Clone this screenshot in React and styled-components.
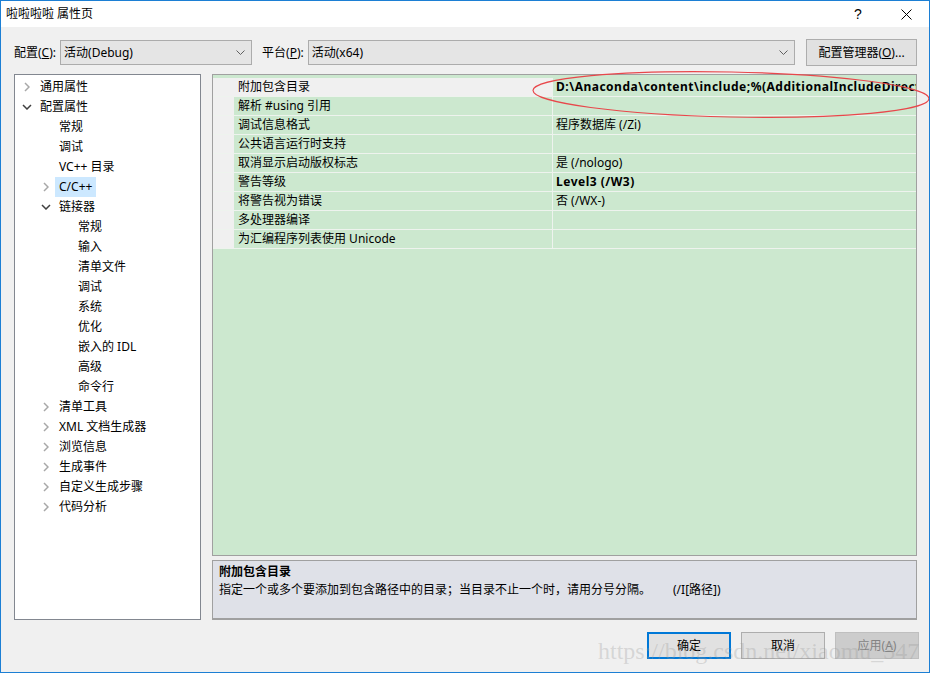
import React from 'react'
import styled, { createGlobalStyle } from 'styled-components'

const uiFont = `"Noto Sans", "Noto Sans CJK SC", sans-serif`

const GlobalStyle = createGlobalStyle`
    html, body {
        margin: 0;
        padding: 0;
        background: #f0f0f0;
    }
    body {
        font-family: ${uiFont};
        font-size: 12px;
        color: #000;
    }
`

const treeItems = [
    { label: '通用属性', level: 0, toggle: 'closed' },
    { label: '配置属性', level: 0, toggle: 'open' },
    { label: '常规', level: 1 },
    { label: '调试', level: 1 },
    { label: 'VC++ 目录', level: 1 },
    { label: 'C/C++', level: 1, toggle: 'closed', selected: true },
    { label: '链接器', level: 1, toggle: 'open' },
    { label: '常规', level: 2 },
    { label: '输入', level: 2 },
    { label: '清单文件', level: 2 },
    { label: '调试', level: 2 },
    { label: '系统', level: 2 },
    { label: '优化', level: 2 },
    { label: '嵌入的 IDL', level: 2 },
    { label: '高级', level: 2 },
    { label: '命令行', level: 2 },
    { label: '清单工具', level: 1, toggle: 'closed' },
    { label: 'XML 文档生成器', level: 1, toggle: 'closed' },
    { label: '浏览信息', level: 1, toggle: 'closed' },
    { label: '生成事件', level: 1, toggle: 'closed' },
    { label: '自定义生成步骤', level: 1, toggle: 'closed' },
    { label: '代码分析', level: 1, toggle: 'closed' },
]

const props = [
    { name: '附加包含目录', value: 'D:\\Anaconda\\content\\include;%(AdditionalIncludeDirectories)', bold: true, selected: true },
    { name: '解析 #using 引用', value: '' },
    { name: '调试信息格式', value: '程序数据库 (/Zi)' },
    { name: '公共语言运行时支持', value: '' },
    { name: '取消显示启动版权标志', value: '是 (/nologo)' },
    { name: '警告等级', value: 'Level3 (/W3)', bold: true },
    { name: '将警告视为错误', value: '否 (/WX-)' },
    { name: '多处理器编译', value: '' },
    { name: '为汇编程序列表使用 Unicode', value: '' },
]

const Chevron = ({ open }) => (
    open ? (
        <svg width="10" height="6" viewBox="0 0 10 6">
            <polyline points="1,1 5,5 9,1" fill="none" stroke="#404040" strokeWidth="1.5" />
        </svg>
    ) : (
        <svg width="6" height="10" viewBox="0 0 6 10">
            <polyline points="1,1 5,5 1,9" fill="none" stroke="#a8a8a8" strokeWidth="1.5" />
        </svg>
    )
)

const ComboArrow = () => (
    <svg width="9" height="5" viewBox="0 0 9 5">
        <polyline points="0.5,0.5 4.5,4.5 8.5,0.5" fill="none" stroke="#606060" strokeWidth="1" />
    </svg>
)

const CloseIcon = () => (
    <svg width="11" height="11" viewBox="0 0 11 11">
        <line x1="0.5" y1="0.5" x2="10.5" y2="10.5" stroke="#000" strokeWidth="1" />
        <line x1="10.5" y1="0.5" x2="0.5" y2="10.5" stroke="#000" strokeWidth="1" />
    </svg>
)

const App = () => {
    return (
        <>
            <GlobalStyle />
            <Window>
                <TitleBar>
                    <Title>啦啦啦啦 属性页</Title>
                    <TitleButtons>
                        <HelpGlyph>?</HelpGlyph>
                        <CloseButton><CloseIcon /></CloseButton>
                    </TitleButtons>
                </TitleBar>

                <Body>
                    <ConfigBar>
                        <FieldLabel>配置(<u>C</u>):</FieldLabel>
                        <Combo width="192px">
                            <span>活动(Debug)</span>
                            <ComboArrow />
                        </Combo>
                        <FieldLabel gap="10px">平台(<u>P</u>):</FieldLabel>
                        <Combo grow>
                            <span>活动(x64)</span>
                            <ComboArrow />
                        </Combo>
                        <ManagerButton>配置管理器(<u>O</u>)...</ManagerButton>
                    </ConfigBar>

                    <Panels>
                        <TreePanel>
                            {treeItems.map((item, key) => (
                                <TreeRow key={key} level={item.level}>
                                    <ToggleBox>
                                        {item.toggle && <Chevron open={item.toggle === 'open'} />}
                                    </ToggleBox>
                                    <TreeLabel selected={item.selected}>{item.label}</TreeLabel>
                                </TreeRow>
                            ))}
                        </TreePanel>

                        <RightColumn>
                            <GridBox>
                                {props.map((row, key) => (
                                    <GridRow key={key}>
                                        <Gutter />
                                        <NameCell selected={row.selected}>{row.name}</NameCell>
                                        <ValueCell bold={row.bold}>{row.value}</ValueCell>
                                    </GridRow>
                                ))}
                            </GridBox>
                            <DescBox>
                                <DescTitle>附加包含目录</DescTitle>
                                <DescText>
                                    指定一个或多个要添加到包含路径中的目录；当目录不止一个时，请用分号分隔。
                                    <Switch>(/I[路径])</Switch>
                                </DescText>
                            </DescBox>
                        </RightColumn>
                    </Panels>

                    <Footer>
                        <DialogButton primary>确定</DialogButton>
                        <DialogButton>取消</DialogButton>
                        <DialogButton disabled>应用(<u>A</u>)</DialogButton>
                    </Footer>
                </Body>

                <Watermark>https://blog.csdn.net/xiaomu_347</Watermark>
                <Highlight width="930" height="673" viewBox="0 0 930 673">
                    <ellipse cx="731" cy="94.5" rx="198" ry="22.5" transform="rotate(1.2 731 94.5)"
                        fill="none" stroke="#e8474b" strokeWidth="1.2" />
                </Highlight>
            </Window>
        </>
    )
}

const Window = styled.div`
    position: relative;
    box-sizing: border-box;
    width: 930px;
    height: 673px;
    border: 1px solid #1c7fd4;
    background: #f0f0f0;
    display: flex;
    flex-direction: column;
    overflow: hidden;
`

const TitleBar = styled.div`
    height: 26px;
    flex-shrink: 0;
    background: #fff;
    display: flex;
    align-items: center;
    justify-content: space-between;
    padding: 0 0 0 5px;
`

const Title = styled.div`
    font-size: 12px;
    line-height: 16px;
`

const TitleButtons = styled.div`
    display: flex;
    align-items: center;
    height: 100%;
`

const HelpGlyph = styled.div`
    width: 46px;
    text-align: center;
    font-size: 14px;
    font-family: "Liberation Sans", sans-serif;
    margin-right: 2px;
`

const CloseButton = styled.div`
    width: 46px;
    display: flex;
    justify-content: center;
`

const Body = styled.div`
    flex: 1;
    display: flex;
    flex-direction: column;
    padding: 0 12px 0 13px;
`

const ConfigBar = styled.div`
    display: flex;
    align-items: center;
    height: 27px;
    margin-top: 12px;
`

const FieldLabel = styled.span`
    line-height: 16px;
    margin-left: ${p => p.gap || '0'};
    margin-right: 4px;
    white-space: nowrap;
`

const Combo = styled.div`
    box-sizing: border-box;
    height: 25px;
    width: ${p => p.width || 'auto'};
    flex: ${p => (p.grow ? '1' : 'none')};
    background: #e5e5e5;
    border: 1px solid #acacac;
    display: flex;
    align-items: center;
    justify-content: space-between;
    padding: 0 6px 0 3px;
    line-height: 16px;
`

const ManagerButton = styled.div`
    box-sizing: border-box;
    height: 27px;
    width: 111px;
    margin-left: 11px;
    background: #e1e1e1;
    border: 1px solid #adadad;
    display: flex;
    align-items: center;
    justify-content: center;
    line-height: 16px;
    white-space: nowrap;
`

const Panels = styled.div`
    display: flex;
    gap: 11px;
    height: 546px;
    margin-top: 8px;
`

const TreePanel = styled.div`
    box-sizing: border-box;
    width: 187px;
    flex-shrink: 0;
    background: #fff;
    border: 1px solid #828790;
    padding-top: 2px;
`

const TreeRow = styled.div`
    display: flex;
    align-items: center;
    height: 20px;
    padding-left: ${p => 3 + p.level * 19}px;
`

const ToggleBox = styled.div`
    width: 22px;
    height: 20px;
    display: flex;
    align-items: center;
    justify-content: center;
    padding-right: 4px;
    box-sizing: border-box;
`

const TreeLabel = styled.span`
    line-height: 20px;
    padding: 0 4px;
    margin-left: -4px;
    white-space: nowrap;
    background: ${p => (p.selected ? '#cce8ff' : 'transparent')};
`

const RightColumn = styled.div`
    flex: 1;
    display: flex;
    flex-direction: column;
    gap: 4px;
`

const GridBox = styled.div`
    box-sizing: border-box;
    flex: 1;
    background: #cce8cf;
    border: 1px solid #a0a0a0;
    padding-top: 3px;
`

const GridRow = styled.div`
    display: grid;
    grid-template-columns: 21px 318px 1fr;
    height: 19px;
    box-sizing: border-box;
    border-bottom: 1px solid #eef3ee;
`

const Gutter = styled.div`
    background: #f0f0f0;
`

const NameCell = styled.div`
    padding-left: 4px;
    line-height: 18px;
    white-space: nowrap;
    background: ${p => (p.selected ? '#f0f0f0' : 'transparent')};
`

const ValueCell = styled.div`
    padding-left: 3px;
    border-left: 1px solid #eef3ee;
    line-height: 18px;
    white-space: nowrap;
    overflow: hidden;
    font-weight: ${p => (p.bold ? 700 : 400)};
    letter-spacing: ${p => (p.bold ? '0.5px' : '0')};
`

const DescBox = styled.div`
    box-sizing: border-box;
    height: 60px;
    flex-shrink: 0;
    background: #dfe1e8;
    border: 1px solid #a0a0a0;
    border-bottom-width: 2px;
    padding: 3px 6px 0;
`

const DescTitle = styled.div`
    font-weight: 700;
    line-height: 16px;
`

const DescText = styled.div`
    line-height: 18px;
    margin-top: 1px;
    white-space: nowrap;
`

const Switch = styled.span`
    margin-left: 22px;
`

const Footer = styled.div`
    display: flex;
    justify-content: flex-end;
    gap: 10px;
    margin-top: 12px;
    margin-right: -2px;
`

const DialogButton = styled.div`
    box-sizing: border-box;
    width: 84px;
    height: 27px;
    display: flex;
    align-items: center;
    justify-content: center;
    line-height: 16px;
    background: ${p => (p.disabled ? '#cccccc' : '#e1e1e1')};
    color: ${p => (p.disabled ? '#838383' : '#000')};
    border: ${p => (p.primary ? '2px solid #0078d7' : p.disabled ? '1px solid #bfbfbf' : '1px solid #adadad')};
`

const Watermark = styled.div`
    position: absolute;
    left: 597px;
    top: 636px;
    font-family: "Liberation Serif", serif;
    font-size: 24px;
    line-height: 28px;
    color: rgba(150, 150, 150, 0.3);
    white-space: nowrap;
    pointer-events: none;
`

const Highlight = styled.svg`
    position: absolute;
    left: -1px;
    top: -1px;
    pointer-events: none;
`

export default App
